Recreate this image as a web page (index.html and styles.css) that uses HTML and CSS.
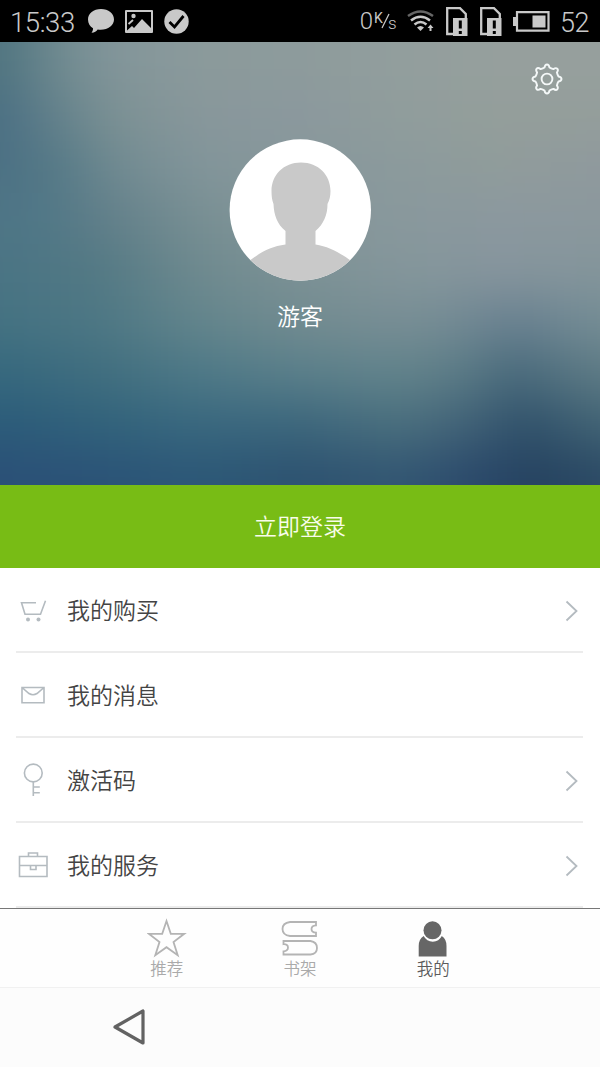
FILE: index.html
```
<!DOCTYPE html>
<html lang="zh-CN">
<head>
<meta charset="utf-8">
<title>我的</title>
<link rel="stylesheet" href="styles.css">
</head>
<body>
<div class="screen">
  <header class="status">
    <div class="status-left">
      <span class="clock">15:33</span>
      <svg class="i-chat" width="28" height="26" viewBox="0 0 28 26"><path d="M14 1C6.500 1 1 5.500 1 11.500c0 4 2 7 5 8.700 0 2-.5 3.300-1.500 4.600 3 0 5-1.600 6.200-3.300 9 1.300 16.300-3.500 16.300-10C27 5.500 21.500 1 14 1z" fill="#c9c9c9"/></svg>
      <svg class="i-pic" width="28" height="23" viewBox="0 0 28 23"><path fill="#c9c9c9" fill-rule="evenodd" d="M1 0h26q1 0 1 1v21q0 1-1 1H1q-1 0-1-1V1q0-1 1-1zM2 2v18.500l5-4.500 2 2 8-9 9 9V2z"/><circle cx="8.500" cy="6" r="2.200" fill="#c9c9c9"/><path d="M3.500 14l4.500-4" stroke="#c9c9c9" stroke-width="1.800"/></svg>
      <svg class="i-ok" width="25" height="25" viewBox="0 0 25 25"><circle cx="12.500" cy="12.500" r="12.200" fill="#c9c9c9"/><path d="M5.500 13l5 5 9-11" fill="none" stroke="#000" stroke-width="2.800"/></svg>
    </div>
    <div class="status-right">
      <span class="rate">0</span>
      <span class="unit"><span class="unit-k">K</span><svg width="9" height="16" viewBox="0 0 9 16"><path d="M1 15L8 1" stroke="#c9c9c9" stroke-width="1.300"/></svg><span class="unit-s">s</span></span>
      <svg class="i-wifi" width="28" height="22" viewBox="0 0 28 22" fill="none" stroke-width="2.500"><path d="M1 6Q13.500-3 26 6" stroke="#666"/><path d="M4 10.500Q13.500 3 23 10.500M7.500 14.500Q13.500 9.500 19.500 14.500" stroke="#c9c9c9"/><path d="M10 17.500Q13.500 14.500 17 17.500L13.500 21z" fill="#c9c9c9"/><path d="M23.500 14.500l3 3.500h-2v3h-2v-3h-2z" fill="#c9c9c9"/></svg>
      <svg class="i-sim" width="22" height="29" viewBox="0 0 22 29"><path d="M7 27H1.200V1.200H14L19.800 7v6" fill="none" stroke="#c9c9c9" stroke-width="2.300"/><path d="M7 11h14.500v18H7z" fill="#c9c9c9"/><path d="M14.300 13.500v8M14.300 24v3" stroke="#000" stroke-width="3"/></svg>
      <svg class="i-sim" width="22" height="29" viewBox="0 0 22 29"><path d="M7 27H1.200V1.200H14L19.800 7v6" fill="none" stroke="#c9c9c9" stroke-width="2.300"/><path d="M7 11h14.500v18H7z" fill="#c9c9c9"/><path d="M14.300 13.500v8M14.300 24v3" stroke="#000" stroke-width="3"/></svg>
      <svg class="i-bat" width="37" height="21" viewBox="0 0 37 21"><path d="M4 1.200h31.500v18.500H4z" fill="none" stroke="#c9c9c9" stroke-width="2.200"/><path d="M0 6h4v9H0zM19.500 4.500h13v12h-13z" fill="#c9c9c9"/></svg>
      <span class="level">52</span>
    </div>
  </header>

  <section class="profile">
    <div class="backdrop">
      <div class="band b1"></div><div class="band b2"></div><div class="band b3"></div>
      <div class="band b4"></div><div class="band b5"></div><div class="band b6"></div>
      <div class="band b7"></div><div class="band b8"></div><div class="band b9"></div>
    </div>
    <div class="tools">
      <svg width="32" height="32" viewBox="-16 -16 32 32" fill="none" stroke="#f4f8f8" stroke-width="1.900" stroke-linejoin="round"><circle r="5.400"/><path d="M-2.500-11.500Q-2-14.500 0-14.500T2.500-11.500Q4-10.500 6.400-9.900Q8.900-11.600 10.300-10.300T9.900-6.400Q10.500-4 11.500-2.500Q14.500-2 14.500 0T11.500 2.500Q10.500 4 9.900 6.400Q11.600 8.900 10.300 10.300T6.400 9.900Q4 10.500 2.500 11.500Q2 14.500 0 14.500T-2.500 11.500Q-4 10.500-6.400 9.900Q-8.900 11.600-10.300 10.300T-9.900 6.400Q-10.500 4-11.500 2.500Q-14.500 2-14.500 0T-11.500-2.500Q-10.500-4-9.900-6.400Q-11.600-8.900-10.300-10.300T-6.400-9.900Q-4-10.500-2.500-11.500z"/></svg>
    </div>
    <svg class="avatar" width="142" height="142" viewBox="0 0 142 142">
      <clipPath id="disc"><circle cx="71.300" cy="71" r="70.700"/></clipPath>
      <g clip-path="url(#disc)"><path fill="#fff" d="M0 0h142v142H0z"/><path fill="#c9c9c9" d="M72 23.500C89.500 23.500 101.500 36 101.500 52c0 5-1 9-3 13 0 11-4 20-12 27v13.500c13 2 24 8 35 16V142H20v-20c12-9 22-14.500 36.500-16.500V92C48 85 45 76 44.500 65 43 61 42.500 57 42.500 52 42.500 36 54.500 23.500 72 23.500z"/></g>
    </svg>
    <div class="name">游客</div>
  </section>

  <div class="login">立即登录</div>

  <main class="menu">
    <div class="row"><svg class="icon" width="34" height="34" viewBox="0 0 34 34"><path d="M20 9.700H5.500L9 21.200H24.500L29.500 7.800"/><circle class="wheel" cx="12" cy="26.500" r="2"/><circle class="wheel" cx="22.500" cy="26.500" r="2"/></svg><span class="label">我的购买</span><svg class="chev" width="14" height="22" viewBox="0 0 14 22"><path d="M1.500 1.500L11.500 11L1.500 20.500"/></svg></div>
    <div class="row"><svg class="icon" width="34" height="34" viewBox="0 0 34 34"><path d="M6 9.500h22v15.200H6zM6 9.500l7 6q4 2.500 8 0l7-6"/></svg><span class="label">我的消息</span></div>
    <div class="row"><svg class="icon" width="34" height="34" viewBox="0 0 34 34"><circle cx="17.300" cy="10" r="8.900"/><path d="M17.300 18.900V33M17.300 24h6.500M17.300 29.800h6.500"/></svg><span class="label">激活码</span><svg class="chev" width="14" height="22" viewBox="0 0 14 22"><path d="M1.500 1.500L11.500 11L1.500 20.500"/></svg></div>
    <div class="row"><svg class="icon" width="34" height="34" viewBox="0 0 34 34"><path d="M3.500 8.500h27.500v20H3.500zM12.500 8.500v-3.500h9v3.500M3.500 17.500h27.500M14.500 17.500v4h5.500v-4"/></svg><span class="label">我的服务</span><svg class="chev" width="14" height="22" viewBox="0 0 14 22"><path d="M1.500 1.500L11.500 11L1.500 20.500"/></svg></div>
  </main>

  <nav class="tabs">
    <div class="tab"><svg width="40" height="40" viewBox="0 0 40 40"><path d="M19.500 3L23.800 15.800H37.200L26.500 24L30.700 37.200L19.500 29.200L8.300 37.200L12.500 24L1.800 15.800H15.200z"/></svg><span>推荐</span></div>
    <div class="tab"><svg width="40" height="40" viewBox="0 0 40 40"><path d="M36 4H10Q2.500 5 2.500 11T10 18H36V14.700Q31.500 14.500 31.500 11T36 7.300zM3.500 23H30.500Q37 24 37 30T30.500 36.500H3.500V33.300Q8 33 8 29.500T3.500 26.200z"/></svg><span>书架</span></div>
    <div class="tab active"><svg width="40" height="40" viewBox="0 0 40 40"><path d="M10.700 18Q5.700 21 5.700 28V38.500H33.500V28Q33.500 21 28.800 18Q26 23.700 19.800 23.700T10.700 18z"/><circle cx="19.500" cy="12.300" r="9"/></svg><span>我的</span></div>
  </nav>

  <footer class="sysnav"><svg width="34" height="40" viewBox="0 0 34 40"><path d="M31 4V36L3 20z" fill="none" stroke="#626262" stroke-width="3.200" stroke-linejoin="round"/></svg></footer>
</div>
</body>
</html>
```
FILE: styles.css
```
* { box-sizing: border-box; }
body { margin: 0; background: #fff; font-family: "Noto Sans CJK SC", sans-serif; }
svg { display: block; flex: none; }
.screen { width: 600px; height: 1067px; display: flex; flex-direction: column; overflow: hidden; }

.status { height: 42px; flex: none; background: #000; color: #c9c9c9; display: flex; justify-content: space-between; padding: 0 11px 0 10px; font-family: Roboto, sans-serif; font-weight: 300; }
.status-left, .status-right { display: flex; align-items: center; }
.clock { font-size: 27.500px; line-height: 42px; width: 77px; padding-top: 3px; letter-spacing: -0.4px; }
.i-pic { margin-left: 10px; }
.i-ok { margin-left: 11px; }
.rate { font-size: 24px; line-height: 40px; }
.unit { display: flex; width: 23px; height: 21px; margin-left: 1px; font-size: 14px; line-height: 14px; font-weight: 400; }
.unit-k { width: 9px; }
.unit svg { margin: 2px -2px 0; }
.unit-s { padding-top: 5px; font-size: 17px; font-weight: 300; }
.i-wifi { margin-left: 10px; }
.i-sim { margin-left: 12px; }
.i-wifi + .i-sim { margin-left: 11px; }
.i-bat { margin-left: 11px; }
.level { width: 29px; margin-left: 10px; font-size: 27px; line-height: 42px; padding-top: 3px; letter-spacing: -0.5px; }

.profile { position: relative; height: 443px; flex: none; overflow: hidden; display: flex; flex-direction: column; align-items: center; color: #fff; }
.backdrop { position: absolute; top: -60px; right: -60px; bottom: -60px; left: -60px; display: flex; flex-direction: column; filter: blur(22px); }
.band { flex: 1 0 50px; }
.b1 { flex: none; height: 108px; background: linear-gradient(90deg, #4f7480 60px, #728c91 125px, #82959a 170px, #8b9a9b 260px, #8d9b9c 360px, #929e9d 460px, #969f9d 560px); }
.b2 { background: linear-gradient(90deg, #4a6f83 60px, #69858d 130px, #7c9194 175px, #88979b 260px, #8b989d 360px, #909d9c 460px, #949e9b 560px); }
.b3 { background: linear-gradient(90deg, #4b7084 60px, #567a87 120px, #708a91 175px, #82959a 260px, #87979b 360px, #8b9a9c 460px, #909c9b 560px, #8f999d 660px); }
.b4 { background: linear-gradient(90deg, #4e7586 60px, #517887 110px, #607e89 160px, #788f93 260px, #84969a 360px, #89989c 460px, #8b989f 560px, #8b989d 660px); }
.b5 { background: linear-gradient(90deg, #4a7484 60px, #537984 160px, #6f8a8f 260px, #7c9195 360px, #84969b 460px, #86959d 560px, #84959b 660px); }
.b6 { background: linear-gradient(90deg, #447282 60px, #4d7784 160px, #63858c 260px, #728b90 360px, #788e95 460px, #748b94 510px, #688090 575px, #758d95 660px); }
.b7 { background: linear-gradient(90deg, #36687e 60px, #406e7f 160px, #4e7987 260px, #5a7f8a 360px, #62838b 460px, #5b7b86 520px, #48697b 575px, #5e7b85 660px); }
.b8 { background: linear-gradient(90deg, #2b5b7a 60px, #31627b 160px, #39687f 260px, #3c667c 360px, #4a6f7e 460px, #426378 520px, #2f506a 585px, #426475 660px); }
.b9 { flex: none; height: 95px; background: linear-gradient(90deg, #2b5077 60px, #2b5377 160px, #2c5877 260px, #2d5270 360px, #335773 460px, #2a486a 540px, #25425f 600px, #2c4b66 660px); }
.tools { position: relative; align-self: stretch; display: flex; justify-content: flex-end; padding: 21px 37px 0 0; height: 97px; }
.avatar { position: relative; }
.name { position: relative; margin-top: 17px; font-size: 23px; line-height: 34px; font-weight: 350; }

.login { height: 83px; flex: none; background: #78bc15; color: #f8fceb; font-size: 23px; line-height: 81px; font-weight: 350; text-align: center; }

.menu { flex: none; height: 340px; padding: 0 17px 0 16px; }
.row { height: 85px; border-bottom: 2px solid #ececec; display: flex; align-items: center; color: #444; }
.icon { fill: none; stroke: #b4bbc0; stroke-width: 1.600px; }
.wheel { fill: #b4bbc0; stroke: none; }
.label { font-size: 23px; line-height: 34px; font-weight: 350; margin-left: 17px; padding-bottom: 1px; flex: 1; }
.chev { margin: 2px 4px 0 0; fill: none; stroke: #b4bbc0; stroke-width: 1.800px; }

.tabs { flex: none; height: 79px; border-top: 1px solid #777; display: flex; justify-content: center; background: #fefefe; }
.tab { width: 133.300px; padding-top: 9px; display: flex; flex-direction: column; align-items: center; color: #aaa; font-size: 16.500px; line-height: 20px; font-weight: 350; }
.tab svg { fill: none; stroke: #b4b4b4; stroke-width: 1.800px; }
.tab.active { color: #5c5c5c; }
.tab.active svg { fill: #666; stroke: none; }

.sysnav { flex: 1; background: #fcfcfc; border-top: 1px solid #f1f1f1; padding: 19px 0 0 112px; }
```
